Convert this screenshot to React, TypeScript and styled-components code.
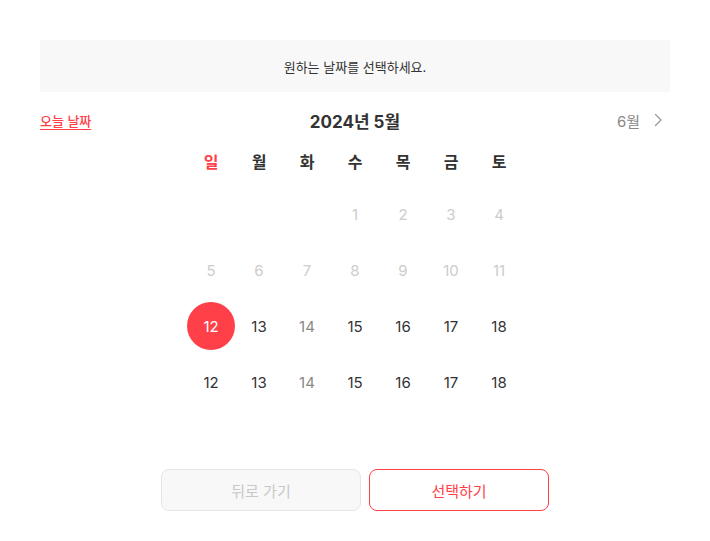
import * as React from 'react'
import styled, { createGlobalStyle, css } from 'styled-components'

const GlobalStyle = createGlobalStyle`
  body {
    margin: 0;
    background: #ffffff;
    font-family: Inter, "Noto Sans CJK KR", sans-serif;
    color: #333333;
  }
`

const Page = styled.div`
  padding: 40px 40px 0;
  display: flex;
  flex-direction: column;
`

const Notice = styled.div`
  height: 52px;
  background: #f8f8f8;
  display: flex;
  align-items: center;
  justify-content: center;
  font-size: 13px;
  color: #333333;
`

const Header = styled.div`
  margin-top: 8px;
  height: 40px;
  display: grid;
  grid-template-columns: 1fr auto 1fr;
  align-items: center;
`

const TodayLink = styled.a`
  justify-self: start;
  font-size: 13px;
  font-weight: 500;
  color: #ff4048;
  text-decoration: underline;
  text-underline-offset: 3px;
  cursor: pointer;
`

const Title = styled.div`
  font-size: 17px;
  font-weight: 700;
  color: #333333;
`

const NextMonth = styled.button`
  justify-self: end;
  display: flex;
  align-items: center;
  gap: 14px;
  padding: 0 8px 0 0;
  border: none;
  background: none;
  font-family: inherit;
  font-size: 15px;
  color: #888888;
  cursor: pointer;
`

const Grid = styled.div`
  align-self: center;
  display: grid;
  grid-template-columns: repeat(7, 48px);
`

const WeekRow = styled(Grid)`
  height: 42px;
  align-items: center;
`

const DayName = styled.div<{ $sunday?: boolean }>`
  text-align: center;
  font-size: 16px;
  font-weight: 600;
  color: ${(p) => (p.$sunday ? '#ff4048' : '#333333')};
`

const DateGrid = styled(Grid)`
  margin-top: 4px;
  grid-auto-rows: 56px;
  align-items: center;
  justify-items: center;
`

type Tone = 'off' | 'normal' | 'muted'

const DateCell = styled.div<{ $tone: Tone; $selected?: boolean }>`
  width: 48px;
  height: 48px;
  border-radius: 50%;
  display: flex;
  align-items: center;
  justify-content: center;
  font-size: 15px;
  font-weight: 400;
  color: ${(p) =>
    p.$tone === 'off' ? '#cccccc' : p.$tone === 'muted' ? '#888888' : '#333333'};
  ${(p) =>
    p.$selected &&
    css`
      background: #ff4048;
      color: #ffffff;
    `}
`

const Actions = styled.div`
  margin-top: 59px;
  display: flex;
  justify-content: center;
  gap: 8px;
`

const Button = styled.button<{ $primary?: boolean; $width: number }>`
  width: ${(p) => p.$width}px;
  height: 42px;
  border-radius: 8px;
  font-family: inherit;
  font-size: 15px;
  font-weight: 400;
  cursor: pointer;
  ${(p) =>
    p.$primary
      ? css`
          background: #ffffff;
          border: 1px solid #ff4048;
          color: #ff4048;
        `
      : css`
          background: #f8f8f8;
          border: 1px solid #e5e5e5;
          color: #c8c8c8;
        `}
`

const weekdays = ['일', '월', '화', '수', '목', '금', '토']

type Day = { n?: number; tone: Tone; selected?: boolean }

const rows: Day[][] = [
  [
    { tone: 'off' },
    { tone: 'off' },
    { tone: 'off' },
    { n: 1, tone: 'off' },
    { n: 2, tone: 'off' },
    { n: 3, tone: 'off' },
    { n: 4, tone: 'off' },
  ],
  [5, 6, 7, 8, 9, 10, 11].map((n) => ({ n, tone: 'off' as Tone })),
  [12, 13, 14, 15, 16, 17, 18].map((n, i) => ({
    n,
    tone: (i === 2 ? 'muted' : 'normal') as Tone,
    selected: i === 0,
  })),
  [12, 13, 14, 15, 16, 17, 18].map((n, i) => ({
    n,
    tone: (i === 2 ? 'muted' : 'normal') as Tone,
  })),
]

const Chevron = () => (
  <svg width="8" height="14" viewBox="0 0 8 14" fill="none">
    <path d="M1.5 1.5l5.5 5.5-5.5 5.5" stroke="#999999" strokeWidth="1.2" strokeLinecap="round" strokeLinejoin="round" />
  </svg>
)

export default function App() {
  return (
    <>
      <GlobalStyle />
      <Page>
        <Notice>원하는 날짜를 선택하세요.</Notice>
        <Header>
          <TodayLink>오늘 날짜</TodayLink>
          <Title>2024년 5월</Title>
          <NextMonth>
            6월
            <Chevron />
          </NextMonth>
        </Header>
        <WeekRow>
          {weekdays.map((d, i) => (
            <DayName key={d} $sunday={i === 0}>
              {d}
            </DayName>
          ))}
        </WeekRow>
        <DateGrid>
          {rows.flatMap((row, r) =>
            row.map((d, c) => (
              <DateCell key={`${r}-${c}`} $tone={d.tone} $selected={d.selected}>
                {d.n}
              </DateCell>
            ))
          )}
        </DateGrid>
        <Actions>
          <Button $width={200}>뒤로 가기</Button>
          <Button $primary $width={180}>
            선택하기
          </Button>
        </Actions>
      </Page>
    </>
  )
}
